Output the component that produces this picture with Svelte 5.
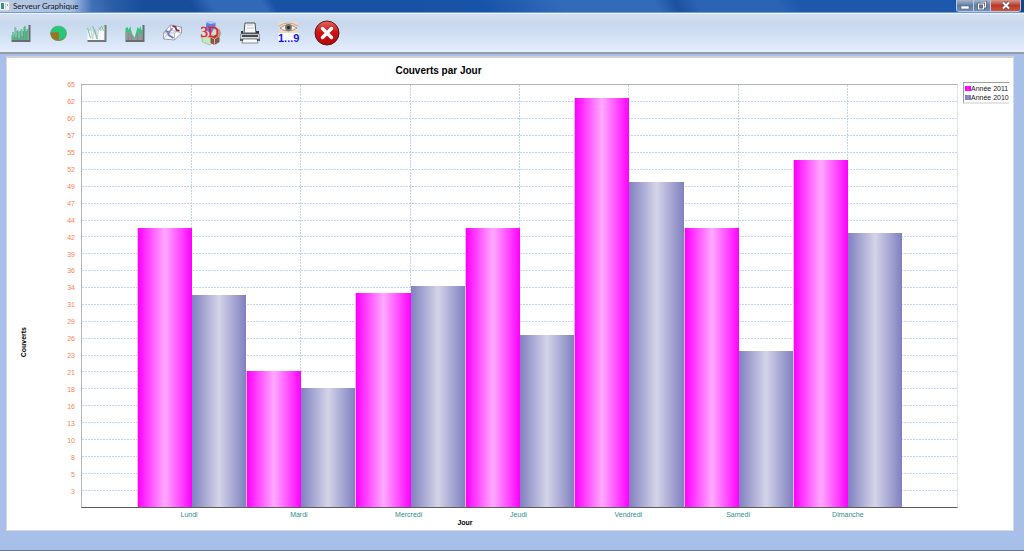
<script lang="ts">
  const maxValue = 65;

  const ticks = [
    65, 62, 60, 57, 55, 52, 49, 47, 44, 42, 39, 36, 34,
    31, 29, 26, 23, 21, 18, 16, 13, 10, 8, 5, 3,
  ];

  const days = [
    { name: "Lundi", y2011: 43, y2010: 32.6 },
    { name: "Mardi", y2011: 21, y2010: 18.4 },
    { name: "Mercredi", y2011: 33, y2010: 34 },
    { name: "Jeudi", y2011: 43, y2010: 26.5 },
    { name: "Vendredi", y2011: 63, y2010: 50 },
    { name: "Samedi", y2011: 43, y2010: 24 },
    { name: "Dimanche", y2011: 53.4, y2010: 42.2 },
  ];

  function percent(value: number) {
    return (value / maxValue) * 100;
  }
</script>

<svelte:head>
  <title>Serveur Graphique</title>
</svelte:head>

<div class="window">
  <header class="titlebar">
    <svg class="app-icon" width="9" height="8" viewBox="0 0 9 8">
      <rect width="9" height="8" fill="#eef3f4" />
      <rect x="1" y="1" width="3" height="6" fill="#3c8f86" />
      <rect x="5" y="1" width="1" height="6" fill="#c3ccd0" />
      <rect x="7" y="2" width="1" height="2" fill="#8fae9c" />
    </svg>
    <span class="caption">Serveur Graphique</span>
    <div class="controls">
      <button class="control" aria-label="Réduire">
        <svg width="10" height="8" viewBox="0 0 10 8">
          <rect x="1" y="4" width="8" height="3" fill="#fff" stroke="#55657f" stroke-width=".6" />
        </svg>
      </button>
      <button class="control" aria-label="Restaurer">
        <svg width="10" height="9" viewBox="0 0 10 9">
          <path d="M3.5 1h5v5h-2M1.5 3h5v5h-5z" fill="none" stroke="#44536c" stroke-width="2.4" />
          <path d="M3.5 1h5v5h-2M1.5 3h5v5h-5z" fill="none" stroke="#fff" stroke-width="1.2" />
        </svg>
      </button>
      <button class="control close" aria-label="Fermer">
        <svg width="10" height="9" viewBox="0 0 10 9">
          <path d="M2 1.5l6 6M8 1.5l-6 6" stroke="#66404a" stroke-width="3.4" />
          <path d="M2 1.5l6 6M8 1.5l-6 6" stroke="#fff" stroke-width="2" />
        </svg>
      </button>
    </div>
  </header>

  <nav class="toolbar">
    <button class="tool" aria-label="Histogramme">
      <svg viewBox="0 0 26 26">
        <path d="M21 5h2v17H4v-2h17z" fill="#686c72" />
        <path d="M4 20v-5h1v-3h1v5h1V7h1v10h1v-6h1v-1h1v8h1v-7h1v-2h1v7h1v-5h1V7h1v-1h1v5h1V9h2v11z" fill="#62aa87" />
        <path d="M5.500 12v8M8.500 8v12M11.500 12v8M14.500 9v11M17.500 6v14M20 9v11" stroke="#38cb83" stroke-width=".8" />
        <path d="M7 14v6M10 15v5M13 14v6M16 12v8M19 12v8" stroke="#838c8b" stroke-width=".6" />
      </svg>
    </button>
    <button class="tool" aria-label="Secteurs">
      <svg viewBox="0 0 26 26">
        <ellipse cx="13" cy="14" rx="8" ry="7" fill="#8d6a34" />
        <ellipse cx="13" cy="13" rx="8" ry="7" fill="#25c878" stroke="#59aa78" stroke-width=".6" />
        <path d="M13 12.500V20C8 20 5 17 5 12.500z" fill="#967721" />
        <path d="M8 12.500h5v7" fill="none" stroke="#b2692a" stroke-width=".7" />
      </svg>
    </button>
    <button class="tool" aria-label="Courbes">
      <svg viewBox="0 0 26 26">
        <path d="M4 6l4 4 4 6 4-9 5-1v14H4z" fill="#f7faf9" />
        <path d="M21 5h2v17H4v-2h17z" fill="#74787d" />
        <path d="M4 6l2 5 1-4 2 12 2-10 2 10 3-12 1 4 3-5 1 4" fill="none" stroke="#b9c0c0" stroke-width=".8" />
        <path d="M4 8l3 10M9 6l2 4 3 9M16 10l2-4 2 5" fill="none" stroke="#5bc997" />
      </svg>
    </button>
    <button class="tool" aria-label="Aires">
      <svg viewBox="0 0 26 26">
        <path d="M4 20V8l2-1 1 3 2-4 1 7 2 3 1 2 2-7 1-4 2 2 1-3 1 4h1v10z" fill="#2ec77d" />
        <path d="M4 20v-8h3l2 2 1-3 1 5 2 2 3-3 1-4 2 3h2v6z" fill="#949997" />
        <path d="M7 13v7M10 14v6M16 14v6" stroke="#797e80" stroke-width=".6" />
        <path d="M21 5h2v17H4v-2h17z" fill="#686c72" />
      </svg>
    </button>
    <button class="tool" aria-label="Rotation">
      <svg viewBox="0 0 26 26">
        <path d="M4 13l7-8 11 2v6l-7 7-11-1z" fill="#f6f8fb" stroke="#888d94" stroke-width=".8" />
        <path d="M4 13h11l7-6M15 13v7M11 5v5l-7 9M11 10l11 3" fill="none" stroke="#9ba0a7" stroke-width=".7" />
        <path d="M6 11l3 1v3l5 3" fill="none" stroke="#7779bd" stroke-width="2" />
        <path d="M9 13l4-5" stroke="#8c86c1" stroke-width="1.500" />
        <path d="M13 6l3 1 1 3 3 1" fill="none" stroke="#803250" stroke-width="1.800" />
      </svg>
    </button>
    <button class="tool" aria-label="Vue 3D">
      <svg viewBox="0 0 26 26">
        <path d="M9 2l5-1 4 2v8l-5 2-5-3z" fill="#5c7fdb" />
        <path d="M8 2l5 2 5-1-4-2z" fill="#b8cbff" />
        <path d="M17 8l5 1 2 5-3 4-5-1z" fill="#aaa58a" />
        <path d="M4 15l6 2 5-2 2 7-5 3-7-3z" fill="#c7e8bf" stroke="#80b779" stroke-width=".6" />
        <path d="M13 17l5-2 4 1v6l-5 3-4-2z" fill="#895447" />
        <path d="M13 17l4 2 5-3M17 19v6" fill="none" stroke="#d6b09d" />
        <circle cx="18" cy="12" r="3" fill="#d7dfd5" />
        <text x="3" y="17" class="three-d">3D</text>
      </svg>
    </button>
    <button class="tool" aria-label="Imprimer">
      <svg viewBox="0 0 26 26">
        <path d="M9 3h10l1 10H8z" fill="#f7f8f9" stroke="#4c5156" />
        <path d="M11 5h6M11 8h7" stroke="#aeb5ba" stroke-width=".7" />
        <path d="M7 11H5v3h18v-3h-3v2H7z" fill="#34383c" />
        <path d="M4.500 14h19v5h-19z" fill="#d7dce0" stroke="#85898e" stroke-width=".8" />
        <path d="M6 16h16" stroke="#212529" stroke-width="1.600" />
        <path d="M7 19h14l1 4H6z" fill="#fafafa" stroke="#70757a" stroke-width=".8" />
        <path d="M4 20h3M21 20h3" stroke="#37393c" stroke-width="1.500" />
      </svg>
    </button>
    <button class="tool" aria-label="Afficher les valeurs">
      <svg viewBox="0 0 26 26">
        <path d="M4 2h19v11H4z" fill="#efd9c9" />
        <path d="M4 6q9-6 19 0" fill="none" stroke="#c4a590" />
        <path d="M5 8q8-6 17 0-9 6-17 0z" fill="#f7f2ee" stroke="#8e6d59" stroke-width=".7" />
        <circle cx="13.500" cy="7.500" r="3.400" fill="#6f7770" />
        <circle cx="13.500" cy="7.500" r="1.600" fill="#242929" />
        <rect x="3" y="13" width="21" height="9" fill="#f7faff" />
        <text x="3" y="22" class="digits">1...9</text>
      </svg>
    </button>
    <button class="tool" aria-label="Quitter">
      <svg viewBox="0 0 26 26">
        <defs>
          <linearGradient id="quit" x1="0" y1="0" x2="0" y2="1">
            <stop offset="0" stop-color="#e26861" />
            <stop offset=".45" stop-color="#cf1416" />
            <stop offset="1" stop-color="#b60508" />
          </linearGradient>
        </defs>
        <circle cx="13" cy="13" r="12" fill="url(#quit)" stroke="#581817" />
        <path d="M8.500 8.500l9 9M17.500 8.500l-9 9" stroke="#fff" stroke-width="3.400" stroke-linecap="round" />
      </svg>
    </button>
  </nav>

  <main class="chart">
    <h1>Couverts par Jour</h1>
    <div class="body">
      <div class="axis-title"><span>Couverts</span></div>
      <div class="ticks">
        {#each ticks as tick}
          <span>{tick}</span>
        {/each}
      </div>
      <div class="plot">
        <svg class="grid" width="100%" height="100%">
          {#each ticks.slice(1) as _, i}
            <line x1="0" x2="100%" y1="{(i + 1) * 4}%" y2="{(i + 1) * 4}%" />
          {/each}
          {#each days as _, i}
            <line x1="{(i + 1) * 12.5}%" x2="{(i + 1) * 12.5}%" y1="0" y2="100%" />
          {/each}
        </svg>
        <div class="bars">
          {#each days as day}
            <div class="group">
              <div class="bar current" style="height: {percent(day.y2011)}%"></div>
              <div class="bar previous" style="height: {percent(day.y2010)}%"></div>
            </div>
          {/each}
        </div>
      </div>
      <div class="side">
        <ul class="legend">
          <li><i class="swatch current"></i>Année 2011</li>
          <li><i class="swatch previous"></i>Année 2010</li>
        </ul>
      </div>
      <div class="days">
        {#each days as day}
          <span>{day.name}</span>
        {/each}
      </div>
    </div>
    <p class="x-title">Jour</p>
  </main>
</div>

<style>
  :global(body) {
    margin: 0;
  }

  .window {
    box-sizing: border-box;
    display: flex;
    flex-direction: column;
    min-height: 100vh;
    border-bottom: 1px solid #64779b;
    background: #a8bfea;
    font-family: "Liberation Sans", Arial, sans-serif;
  }

  .titlebar {
    display: flex;
    align-items: center;
    height: 12px;
    padding-right: 3px;
    border-bottom: 1px solid #6c9cd5;
    background:
      linear-gradient(90deg, #bdcbe3 0, #a6bee1 7%, rgba(80, 125, 190, 0.6) 9%, transparent 14%),
      linear-gradient(60deg, #2a5dad 0 9%, #174d9b 11% 19%, #3168b8 21% 26%, #1852a5 27% 38%, #1753a8 47%, #336bbb 55% 64%, #1b519f 66%, #2b63b5 68% 76%, #1d58ac 78% 93%, #0e3b7e 95%, #174381 100%);
  }

  .app-icon {
    margin-right: 4px;
  }

  .caption {
    flex: 1;
    color: #10151f;
    font-family: Lato, "Noto Sans", sans-serif;
    font-size: 8px;
    line-height: 12px;
  }

  .controls {
    display: flex;
    align-self: flex-start;
    border: 1px solid #b9c8dc;
    border-top: 0;
    border-radius: 0 0 3px 3px;
    overflow: hidden;
  }

  .control {
    display: flex;
    align-items: center;
    justify-content: center;
    width: 17px;
    height: 11px;
    padding: 0;
    border: 0;
    border-right: 1px solid #c0cbdc;
    background: linear-gradient(#a8b5ca, #627da4 50%, #708fb8);
  }

  .control.close {
    width: 29px;
    border-right: 0;
    background: linear-gradient(#d29a94, #b73a26 50%, #cf563d);
  }

  .toolbar {
    display: flex;
    align-items: center;
    gap: 11px;
    height: 38px;
    padding-left: 7px;
    border-top: 1px solid #f0f5fc;
    border-bottom: 2px solid #969ca6;
    background: linear-gradient(#d4e0f1, #c8d8ed 25%, #d2e1f4 60%, #e4efff);
  }

  .tool {
    width: 27px;
    height: 26px;
    padding: 0;
    border: 0;
    background: none;
  }

  .tool:nth-child(n + 7) {
    width: 28px;
  }

  .tool svg {
    display: block;
    width: 100%;
    height: 100%;
  }

  .three-d {
    fill: #e71d22;
    font: 15px "Liberation Serif", serif;
    stroke: #e71d22;
    stroke-width: 0.4;
  }

  .digits {
    fill: #1414e6;
    font: bold 11px "Liberation Sans", sans-serif;
  }

  .chart {
    display: flex;
    flex: 1;
    flex-direction: column;
    margin: 2px 10px 19px 6px;
    border: 1px solid #d4dae6;
    border-top: 2px solid #d0d0d0;
    background: #fff;
  }

  h1 {
    margin: 7px 143px 7px 0;
    font-size: 10px;
    line-height: 12px;
    text-align: center;
  }

  .body {
    display: grid;
    flex: 1;
    grid-template-columns: 34px 34px 1fr 55px;
    grid-template-rows: 1fr auto;
    font-size: 7px;
    line-height: 8px;
  }

  .axis-title {
    display: flex;
    align-items: center;
    justify-content: center;
    padding-top: 92px;
    font-weight: bold;
  }

  .axis-title span {
    writing-mode: vertical-rl;
    transform: rotate(180deg);
  }

  .ticks {
    display: flex;
    flex-direction: column;
    margin: -3px 0 3px;
    color: #ff7f50;
    text-align: right;
  }

  .ticks span {
    flex: 1 1 0;
    min-height: 8px;
  }

  .plot {
    display: grid;
    margin-left: 6px;
    border: 1px solid #b4b4b4;
    border-right-color: #e4e4e8;
    border-bottom-color: #5c5c5c;
  }

  .grid,
  .bars {
    grid-area: 1 / 1;
  }

  .grid {
    min-height: 100%;
    height: 0;
  }

  .grid line {
    stroke: #c2d4f2;
    stroke-dasharray: 2 1;
    shape-rendering: crispEdges;
  }

  .bars {
    display: flex;
    padding: 0 6.25%;
    z-index: 1;
  }

  .group {
    display: flex;
    flex: 1;
    align-items: flex-end;
  }

  .bar {
    box-sizing: border-box;
    flex: 1;
    border-left: 1px solid #e6b8f0;
  }

  .bar.current {
    background: linear-gradient(90deg, #f0f, #ffaaff 50%, #f0f);
  }

  .bar.previous {
    border-left: 0;
    background: linear-gradient(90deg, #8080c0, #d4d4e8 50%, #8080c0);
  }

  .legend {
    margin: -2px 4px 0 5px;
    padding: 1px 0 0 1px;
    border: 1px solid #a0a0a0;
    border-right: 0;
    border-bottom: 2px solid #e4e4e4;
    list-style: none;
    white-space: nowrap;
  }

  .legend li {
    display: flex;
    align-items: center;
    height: 9px;
    color: #222;
  }

  .swatch {
    width: 6px;
    height: 5px;
  }

  .swatch.current {
    background: linear-gradient(90deg, #f0f 40%, #ffaaff 50%, #f0f 60%);
  }

  .swatch.previous {
    background: linear-gradient(90deg, #8080c0 40%, #d4d4e8 50%, #8080c0 60%);
  }

  .days {
    display: flex;
    grid-column: 3;
    margin: 3px 0 0 4px;
    padding: 0 6.25%;
    color: #2a9090;
    text-align: center;
  }

  .days span {
    flex: 1;
  }

  .x-title {
    margin: 0 90px 3px 0;
    font-size: 7px;
    font-weight: bold;
    line-height: 8px;
    text-align: center;
  }
</style>
